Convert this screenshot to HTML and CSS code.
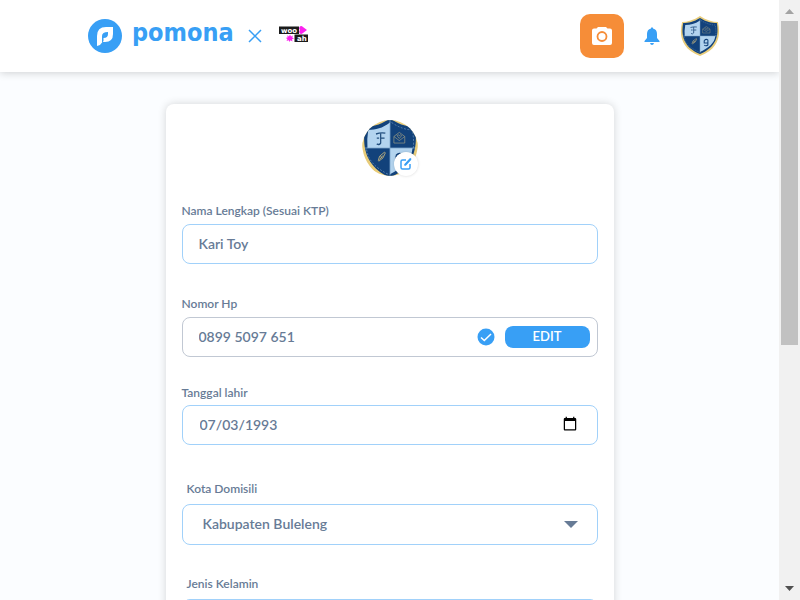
FILE: index.html
```html
<!DOCTYPE html>
<html lang="id">
<head>
<meta charset="utf-8">
<meta name="viewport" content="width=device-width, initial-scale=1">
<title>Profil</title>
<link rel="stylesheet" href="styles.css">
</head>
<body>
<svg class="defs" aria-hidden="true">
  <symbol id="crest" viewBox="0 0 40 42">
    <path d="M20 1C14 5 8 7 3 7C0 20 2 34 20 41C38 34 40 20 37 7C32 7 26 5 20 1Z" fill="#e8cc7a"/>
    <path d="M20 3C14 7 9 8 4 8C2 20 4 32 20 39C36 32 38 20 36 8C31 8 26 7 20 3Z" fill="#12427b"/>
    <path d="M20 5.500C15 9 11 10 6 10Q5 16 5.500 21H20ZM20 21V37C28 33 34 28 34.500 21Z" fill="#b3d4ef"/>
    <path d="M20 4V38M4 21H36" stroke="#7fa6cb" stroke-width=".5"/>
    <path d="M21 5.500Q28 10 34.500 10Q35.500 17 35 21M5 22Q6 31 19 37" fill="none" stroke="#7fa6cb" stroke-width=".4" stroke-dasharray="1.200 1"/>
    <path d="M11 12.500Q14 11.500 17 12M14 12V18Q13 19.500 11.500 18.500M14 15H16.500M11.500 15H13" fill="none" stroke="#234f7e" stroke-width=".8"/>
    <path d="M22.500 14L26 11.500L29.500 14V18H22.500ZM22.500 14L26 16.500L29.500 14M24.500 13.500Q25.300 12.500 26 13.500Q26.700 12.500 27.500 13.500L26 15.200Z" fill="none" stroke="#a5a284" stroke-width=".4"/>
    <path d="M12.500 28.500L13.300 26L16.500 23.500L17 24L15.500 27L12.800 29ZM13.300 28L15.500 25.500M13.800 26L15 27" fill="none" stroke="#d3bd7c" stroke-width=".5"/>
    <path d="M24 25.500Q26 23.500 27.500 25V30Q25.500 31.500 24 30M24 25.500V28H27.500" fill="none" stroke="#12427b" stroke-width="1"/>
  </symbol>
</svg>
<div class="window">
  <div class="page">
    <header class="topbar">
      <a class="brand" href="#" aria-label="pomona">
        <svg class="brand-mark" viewBox="0 0 34 34" aria-hidden="true">
          <circle cx="17" cy="17" r="17" fill="#389ff5"/>
          <path d="M9 27V17Q9 8 18 8H25V15Q25 23 17 23H14.500Q13 26 9 27Z" fill="#fff"/>
          <path d="M14 24V17Q14 13 20 13V15Q20 19 15.500 19V22" fill="#389ff5"/>
        </svg>
        <span class="brand-name">pomona</span>
        <svg class="brand-cross" viewBox="0 0 14 14" aria-hidden="true"><path d="M1 1L13 13M13 1L1 13" stroke="#389ff5" stroke-width="1.500"/></svg>
        <svg class="partner" viewBox="0 0 30 18" role="img" aria-label="woo ah">
          <path d="M0 1.500H20V9H0ZM15.500 9.500H29V17H15.500Z" fill="#1b1b1b"/>
          <path d="M20.500 2Q22 0 24 2L28 5L24 8Q22 10 20.500 8Q19.500 6.500 21 5Q19.500 3.500 20.500 2Z" fill="#fb22ee"/>
          <path d="M11 9.500L12 11.500L14 10.500L13.200 12.500L15 13.500L13 14.200L13.500 16.500L11.500 15.300L10.500 17L9.800 15.200L7.500 16L8.500 14L6.800 13L8.800 12.300L8 10.200L10 11.400Z" fill="#fb22ee"/>
          <text class="partner-text" x="2" y="7.500">woo</text>
          <text class="partner-text" x="18" y="15.500">ah</text>
        </svg>
      </a>
      <nav class="actions">
        <button class="camera" type="button" aria-label="Kamera">
          <svg viewBox="0 0 20 18" aria-hidden="true"><path d="M6 0H14L15.500 1.500H18Q20 1.500 20 3.500V16Q20 18 18 18H2Q0 18 0 16V3.500Q0 1.500 2 1.500H4.500Z" fill="#fff"/><circle cx="10" cy="9.500" r="4.500" fill="#fff" stroke="#f68d38" stroke-width="1.800"/></svg>
        </button>
        <button class="bell" type="button" aria-label="Notifikasi">
          <svg viewBox="0 0 16 18" aria-hidden="true"><path d="M7 1.500V1Q8 -.5 9 1V1.500Q13 2.300 13 7V11L15.500 14V15H.5V14L3 11V7Q3 2.300 7 1.500ZM6 16H10Q9.500 18 8 18T6 16Z" fill="#389ff5"/></svg>
        </button>
        <a class="avatar" href="#" aria-label="Profil"><svg viewBox="1 0 38 42" preserveAspectRatio="none" aria-hidden="true"><use href="#crest" width="40" height="42"/></svg></a>
      </nav>
    </header>
    <main class="content">
      <form class="card">
        <div class="photo">
          <svg class="photo-image" viewBox="2 4 36 34" preserveAspectRatio="none" aria-hidden="true"><use href="#crest" width="40" height="42"/></svg>
          <button class="photo-edit" type="button" aria-label="Ubah foto">
            <svg viewBox="0 0 14 14" fill="none" stroke="#389ff5" stroke-width="1.500" aria-hidden="true"><path d="M7 3H3.500Q2 3 2 4.500V10.500Q2 12 3.500 12H9.500Q11 12 11 10.500V7M5.500 8.500L12 1.500"/><path d="M6 8L11.500 2" stroke-width="2"/></svg>
          </button>
        </div>
        <div class="field name-field">
          <label for="name">Nama Lengkap (Sesuai KTP)</label>
          <div class="box"><input id="name" type="text" value="Kari Toy"></div>
        </div>
        <div class="field phone-field">
          <label for="phone">Nomor Hp</label>
          <div class="box muted">
            <input id="phone" type="tel" value="0899 5097 651">
            <svg class="verified" viewBox="0 0 18 18" aria-hidden="true"><circle cx="9" cy="9" r="8.500" fill="#389ff5"/><path d="M4 9.500L7.300 12.500L14 6" fill="none" stroke="#fff" stroke-width="1.500"/></svg>
            <button class="edit" type="button">EDIT</button>
          </div>
        </div>
        <div class="field date-field">
          <label for="birth">Tanggal lahir</label>
          <div class="box"><input id="birth" type="date" value="1993-07-03"></div>
        </div>
        <div class="field select-field">
          <label for="city">Kota Domisili</label>
          <div class="box"><select id="city"><option>Kabupaten Buleleng</option></select>
            <svg class="caret" viewBox="0 0 14 7" aria-hidden="true"><path d="M0 0H14L7 7Z" fill="#677b96"/></svg></div>
        </div>
        <div class="field select-field">
          <label for="gender">Jenis Kelamin</label>
          <div class="box"><select id="gender"><option>Laki-laki</option></select>
            <svg class="caret" viewBox="0 0 14 7" aria-hidden="true"><path d="M0 0H14L7 7Z" fill="#677b96"/></svg></div>
        </div>
      </form>
    </main>
  </div>
  <div class="scrollbar" aria-hidden="true">
    <svg class="arrow" viewBox="0 0 9 5"><path d="M0 5L4.500 0L9 5Z" fill="#a3a3a3"/></svg>
    <div class="track"><div class="thumb"></div></div>
    <svg class="arrow" viewBox="0 0 9 5"><path d="M0 0H9L4.500 5Z" fill="#505050"/></svg>
  </div>
</div>
</body>
</html>
```
FILE: styles.css
```css
* { box-sizing: border-box; }
body {
  margin: 0;
  background: #fbfdff;
  color: #677b96;
  font-family: Lato, "Noto Sans", sans-serif;
  font-weight: 600;
}
button { border: 0; padding: 0; cursor: pointer; font: inherit; }
svg { display: block; }
.defs { position: absolute; width: 0; height: 0; }
.window {
  display: grid;
  grid-template-columns: 1fr 21px;
  height: 100vh;
  overflow: hidden;
}
.page { min-width: 0; overflow: hidden; }
.topbar {
  display: flex;
  align-items: center;
  justify-content: space-between;
  height: 72px;
  padding: 0 59px 0 88px;
  background: #fff;
  box-shadow: 0 1px 8px rgba(0, 0, 0, .18);
}
.brand { display: flex; align-items: center; color: #389ff5; text-decoration: none; }
.brand-mark { width: 34px; height: 34px; }
.brand-name {
  margin: 0 14px 6px 10px;
  font: bold 25px/30px "DejaVu Sans Condensed", "DejaVu Sans", sans-serif;
}
.brand-cross { width: 14px; height: 14px; margin-right: 17px; }
.partner { width: 30px; height: 18px; margin-bottom: 4px; }
.partner-text { fill: #fff; font: bold 7px "DejaVu Sans", sans-serif; }
.actions { display: flex; align-items: center; }
.camera {
  display: grid;
  place-items: center;
  width: 44px;
  height: 44px;
  margin-right: 20px;
  border-radius: 10px;
  background: #f68d38;
}
.camera svg { width: 20px; height: 18px; }
.bell { margin-right: 20px; background: none; }
.bell svg { width: 16px; height: 18px; }
.avatar svg { width: 40px; height: 42px; }
.content { padding: 32px 16px; }
.card {
  max-width: 448px;
  margin: 0 auto;
  padding: 16px;
  border-radius: 8px;
  background: #fff;
  box-shadow: 0 0 8px rgba(0, 0, 0, .16);
}
.photo { position: relative; width: 56px; height: 56px; margin: 0 auto 25px; }
.photo-image { width: 56px; height: 56px; border-radius: 50%; }
.photo-edit {
  position: absolute;
  right: 0;
  bottom: 0;
  display: grid;
  place-items: center;
  width: 24px;
  height: 24px;
  border-radius: 50%;
  background: #fff;
  box-shadow: 0 0 3px rgba(0, 0, 0, .16);
}
.photo-edit svg { width: 14px; height: 14px; }
.field label { display: block; font-size: 12px; line-height: 20px; padding-bottom: 2px; }
.box {
  display: flex;
  align-items: center;
  height: 40px;
  border: 1px solid #a1d1fa;
  border-radius: 8px;
  background: #fff;
}
.box.muted { border-color: #c1c8d3; }
.name-field { margin-bottom: 30px; }
.name-field label, .phone-field label { padding-bottom: 3px; }
.phone-field { margin-bottom: 26px; }
.date-field { margin-bottom: 34px; }
.box input, .box select {
  flex: 1;
  min-width: 0;
  height: 100%;
  padding: 0 16px 2px;
  border: 0;
  border-radius: 8px;
  outline: 0;
  background: transparent;
  color: inherit;
  font: inherit;
  font-size: 14px;
}
.box input[type="date"] { padding-right: 18px; padding-left: 17px; }
.box input::-webkit-datetime-edit-month-field,
.box input::-webkit-datetime-edit-day-field,
.box input::-webkit-datetime-edit-year-field { padding: 0; }
.box input::-webkit-calendar-picker-indicator { width: 16px; height: 16px; padding: 1px; }
.box select { appearance: none; padding-left: 20px; }
.verified { width: 18px; height: 18px; margin-right: 10px; }
.edit {
  width: 85px;
  height: 22px;
  margin-right: 7px;
  padding-bottom: 2px;
  border-radius: 8px;
  background: #389ff5;
  color: #fff;
  font-size: 13px;
  line-height: 20px;
}
.select-field { margin-bottom: 29px; }
.select-field label { padding: 0 5px 5px; }
.select-field .box { height: 41px; }
.caret { width: 14px; height: 7px; margin-right: 19px; }
.scrollbar {
  display: flex;
  flex-direction: column;
  align-items: center;
  padding: 9px 2px;
  background: #f1f1f1;
}
.arrow { width: 9px; height: 5px; }
.track { flex: 1; align-self: stretch; padding: 7px 0; }
.thumb { height: 58%; background: #c1c1c1; }
```
